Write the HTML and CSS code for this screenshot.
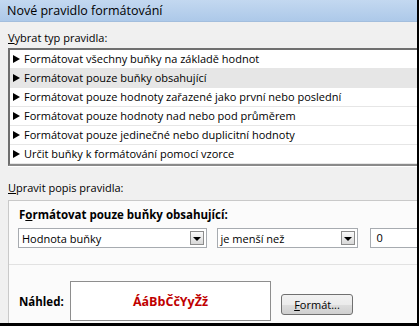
FILE: index.html
```html
<!DOCTYPE html>
<html lang="cs">
<head>
<meta charset="utf-8">
<title>Nové pravidlo formátování</title>
<link rel="stylesheet" href="styles.css">
</head>
<body>
<div class="window">
  <div class="titlebar">Nové pravidlo formátování</div>
  <div class="content">
    <div class="label"><u>V</u>ybrat typ pravidla:</div>
    <ul class="rules">
      <li><span class="tri"></span>Formátovat všechny buňky na základě hodnot</li>
      <li class="selected"><span class="tri"></span>Formátovat pouze buňky obsahující</li>
      <li><span class="tri"></span>Formátovat pouze hodnoty zařazené jako první nebo poslední</li>
      <li><span class="tri"></span>Formátovat pouze hodnoty nad nebo pod průměrem</li>
      <li><span class="tri"></span>Formátovat pouze jedinečné nebo duplicitní hodnoty</li>
      <li><span class="tri"></span>Určit buňky k formátování pomocí vzorce</li>
    </ul>
    <div class="label label2"><u>U</u>pravit popis pravidla:</div>
    <div class="group">
      <div class="heading">F<u>o</u>rmátovat pouze buňky obsahující:</div>
      <div class="conds">
        <div class="combo combo1"><span class="val">Hodnota buňky</span><span class="btn"><span class="down"></span></span></div>
        <div class="combo combo2"><span class="val">je menší než</span><span class="btn"><span class="down"></span></span></div>
        <div class="input">0</div>
      </div>
      <div class="sep"></div>
      <div class="preview-row">
        <div class="plabel">Náhled:</div>
        <div class="preview">ÁáBbČčYyŽž</div>
        <div class="button"><u>F</u>ormát...</div>
      </div>
    </div>
  </div>
</div>
</body>
</html>
```
FILE: styles.css
```css
* { box-sizing: border-box; }
html, body { margin: 0; padding: 0; }
body {
  width: 419px;
  height: 326px;
  overflow: hidden;
  background: #000;
  font-family: "Open Sans", "Noto Sans", sans-serif;
  font-size: 11px;
  color: #000;
}
.window {
  width: 417px;
  height: 323px;
  background: #f0f0f0;
  overflow: hidden;
  display: flex;
  flex-direction: column;
}
.titlebar {
  height: 22px;
  flex: none;
  background: linear-gradient(#c3d8f0, #adc9e9);
  border-bottom: 1px solid #a3bedd;
  padding-left: 7px;
  font-size: 12.5px;
  line-height: 21px;
  color: #000;
}
.content {
  flex: 1;
  padding: 8px 0 0 8px;
  display: flex;
  flex-direction: column;
  min-height: 0;
}
.label {
  line-height: 16px;
  height: 17px;
}
.rules {
  list-style: none;
  margin: 1px 0 0 0;
  padding: 0;
  width: 420px;
  background: #fff;
  border-top: 2px solid #6f6f6f;
  border-left: 2px solid #6f6f6f;
  border-bottom: 2px solid #8a8a8a;
  box-shadow: 0 1px 0 #fff;
}
.rules li {
  height: 19px;
  line-height: 18px;
  padding-left: 3px;
  border-bottom: 1px solid #e6e6e6;
  display: flex;
  align-items: center;
  white-space: nowrap;
}
.rules li.selected { background: #e6e6e6; }
.tri {
  width: 0;
  height: 0;
  border-left: 7px solid #000;
  border-top: 4px solid transparent;
  border-bottom: 4px solid transparent;
  margin-right: 4px;
  flex: none;
}
.label2 { margin-top: 14px; }
.group {
  margin-top: 3px;
  flex: 1;
  width: 420px;
  background: #fbfbfb;
  border-top: 1px solid #c9c9c9;
  border-left: 1px solid #c9c9c9;
  display: flex;
  flex-direction: column;
  padding: 6px 0 0 10px;
}
.heading {
  font-weight: bold;
  font-size: 11.5px;
  line-height: 16px;
}
.conds {
  display: flex;
  margin-top: 5px;
}
.combo {
  height: 20px;
  background: #fff;
  border: 1px solid #a7abb0;
  display: flex;
  align-items: center;
  justify-content: space-between;
  padding: 0 2px 0 3px;
}
.combo1 { width: 194px; margin-left: -1px; }
.combo2 { width: 145px; margin-left: 10px; }
.val { line-height: 17px; }
.btn {
  width: 14px;
  height: 14px;
  border: 1px solid #8c8c8c;
  background: linear-gradient(#fafafa, #d8d8d8);
  display: flex;
  align-items: center;
  justify-content: center;
}
.down {
  width: 0;
  height: 0;
  margin-top: 1px;
  border-top: 4px solid #000;
  border-left: 4px solid transparent;
  border-right: 4px solid transparent;
}
.input {
  width: 60px;
  height: 20px;
  background: #fff;
  border: 1px solid #a7abb0;
  padding-left: 6px;
  line-height: 18px;
  margin-left: 12px;
}
.sep {
  margin: 16px 0 0 -10px;
  height: 1px;
  background: #e2e2e2;
}
.preview-row {
  display: flex;
  align-items: center;
  margin-top: 16px;
}
.plabel {
  width: 51px;
  font-weight: bold;
  font-size: 11.5px;
}
.preview {
  width: 201px;
  height: 40px;
  background: #fff;
  border: 1px solid #8e8e8e;
  display: flex;
  align-items: center;
  justify-content: center;
  color: #c00000;
  font-weight: bold;
  font-size: 12.5px;
}
.button {
  margin-left: 10px;
  width: 72px;
  height: 21px;
  border: 1px solid #707070;
  border-radius: 3px;
  background: linear-gradient(#f2f2f2 0%, #ebebeb 50%, #dddddd 51%, #cfcfcf 100%);
  text-align: center;
  line-height: 19px;
  margin-top: 7px;
}
```
